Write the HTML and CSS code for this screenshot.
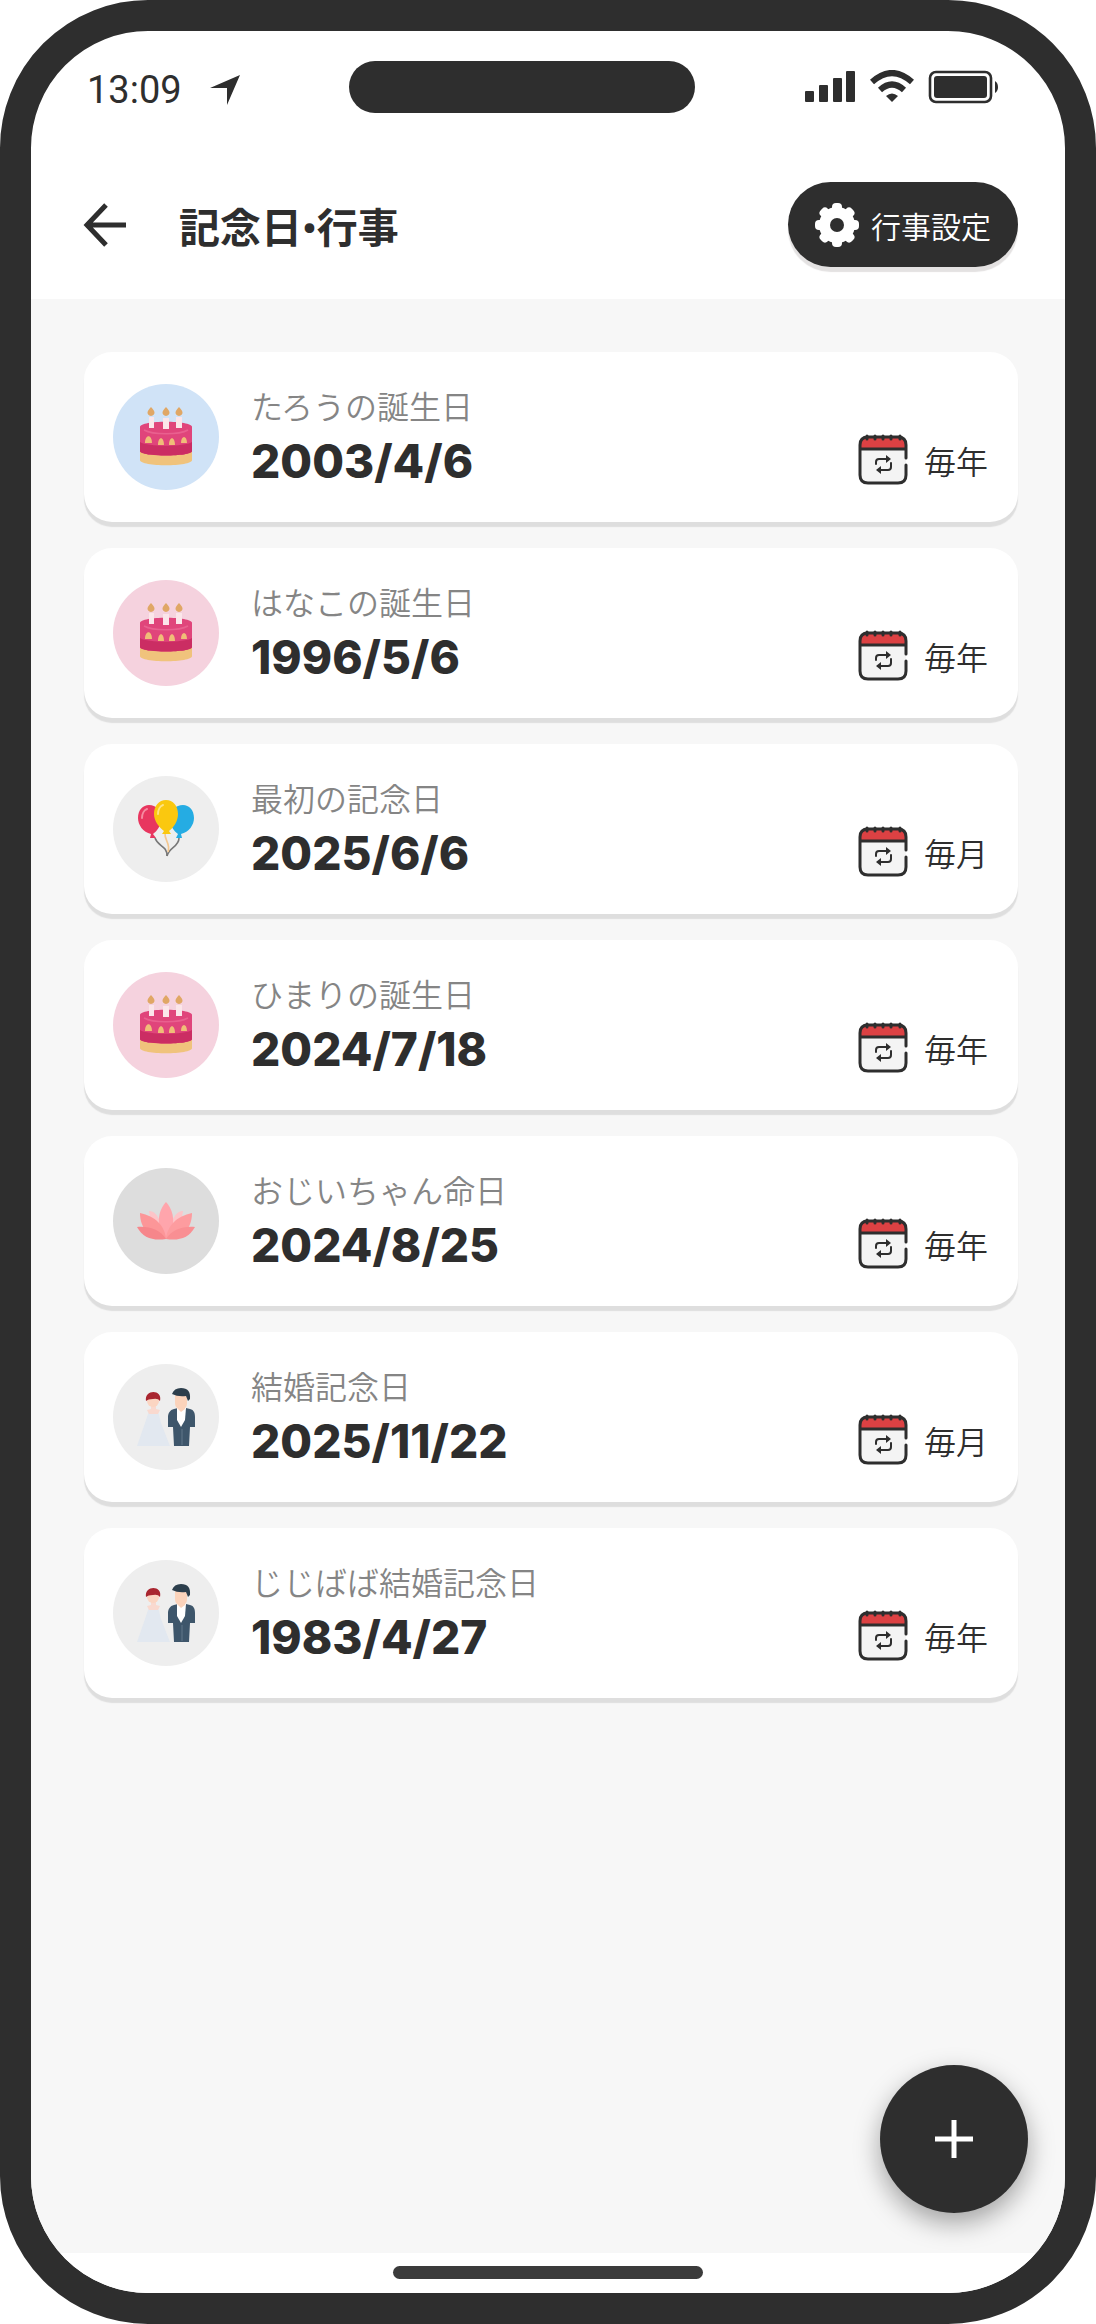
FILE: index.html
```html
<!DOCTYPE html>
<html lang="ja">
<head>
    <meta charset="utf-8">
    <meta name="viewport" content="width=device-width, initial-scale=1">
    <title>記念日•行事</title>
    <link rel="stylesheet" href="styles.css">
</head>
<body>
    <!-- shared icons -->
    <svg class="sprite" aria-hidden="true">
        <symbol id="icon-cake" viewBox="0 0 56 60">
            <path d="M2 44v9c0 7 52 7 52 0v-9z" fill="#f0c37c"/>
            <path d="M2 20c0-7 52-7 52 0v24c0 6-52 6-52 0z" fill="#e0457b"/>
            <path d="M2 35c8 5 44 5 52 0v9c0 6-52 6-52 0z" fill="#cb2d63"/>
            <path d="M6 23c9 5 35 5 44 0" fill="none" stroke="#e9608f" stroke-width="1.5"/>
            <path d="M7 36c0-9 7-9 7 0zM20 38c0-9 6-9 6 0zM31 38c0-9 6-9 6 0zM43 36c0-8 6-8 6 0z" fill="#f0bd78"/>
            <path d="M11 10h5v11h-5zM25 11h6v11h-6zM38 10h6v11h-6z" fill="#fbe6ea"/>
            <path d="M13 0q7 7 0 9q-7-2 0-9zM28 0q7 7 0 9q-7-2 0-9zM41 0q7 7 0 9q-7-2 0-9z" fill="#e0a765"/>
        </symbol>
        <symbol id="icon-balloons" viewBox="0 0 58 60">
            <path d="M18 39c3 9 12 7 12 18" fill="none" stroke="#777" stroke-width="1.6"/>
            <path d="M42 39c0 9-10 9-12 18" fill="none" stroke="#777" stroke-width="1.6"/>
            <path d="M28 33c-1 9 6 11 3 20" fill="none" stroke="#f5c78e" stroke-width="1.6"/>
            <path d="M12 6c7 0 12 5 12 14 0 7-4 12-8 15l3 4h-6l1-4C6 33 1 26 1 19 1 11 6 6 12 6z" fill="#e8365f"/>
            <path d="M46 6c6 0 11 5 11 13 0 7-5 14-13 16l1 4h-6l2-4c-4-3-8-8-8-15 0-9 6-14 13-14z" fill="#25ace3"/>
            <path d="M29 1c7 0 12 6 12 14 0 7-4 13-9 17l2 3h-9l2-3c-5-4-10-10-10-17C17 7 22 1 29 1z" fill="#fac80f"/>
            <path d="M5 19c0-4 2-8 5-9" fill="none" stroke="#f58ba1" stroke-width="2" stroke-linecap="round"/>
            <path d="M21 15c0-4 2-8 5-9" fill="none" stroke="#fde384" stroke-width="2" stroke-linecap="round"/>
        </symbol>
        <symbol id="icon-lotus" viewBox="0 0 60 40">
            <path d="M13 10q10-1 17 28q-14-5-17-28zM47 10q-10-1-17 28q14-5 17-28z" fill="#fdc4c8"/>
            <path d="M30 1c11 12 8 30 0 37c-8-7-11-25 0-37z" fill="#ffa5ac"/>
            <path d="M4 12c15 3 25 13 26 26c-16 0-26-10-26-26z" fill="#fc9698"/>
            <path d="M56 12c-15 3-25 13-26 26c16 0 26-10 26-26z" fill="#fd9c9f"/>
            <path d="M1 26c13-1 23 3 29 12c-13 2-23-1-29-12z" fill="#f6868b"/>
            <path d="M59 26c-13-1-23 3-29 12c13 2 23-1 29-12z" fill="#f98f93"/>
        </symbol>
        <symbol id="icon-couple" viewBox="0 0 60 60">
            <path d="M13 24h9l3 12 9 23H1l8-23z" fill="#e2e8f0"/>
            <path d="M11 23l2 4h9l2-4-4-1v-4h-5v4z" fill="#f9d9cf"/>
            <circle cx="17" cy="14" r="6" fill="#fbd5c2"/>
            <path d="M10 14c-2-12 17-12 14 0q-2-3-7-2-5 0-7 2z" fill="#a9252f"/>
            <path d="M38 22l4-1h8l4 1c4 1 5 4 5 8v10h-5l-1 19H38l-1-19h-5V30c0-4 2-7 6-8z" fill="#3e566b"/>
            <path d="M41 21h9l-1 12-4 7-4-7z" fill="#fff"/>
            <path d="M46 42v16" stroke="#60778a" stroke-width="1"/>
            <path d="M39 8h12v8c0 9-12 9-12 0z" fill="#fbd3bb"/>
            <path d="M42 17h7v5l-4 3-3-3z" fill="#fbd3bb"/>
            <path d="M36 7q2-6 9-6q10 0 9 11l-2 2-2-5q-8 1-14-2z" fill="#2c3e4c"/>
        </symbol>
        <symbol id="icon-calendar" viewBox="0 0 50 52">
            <rect x="2" y="4" width="46" height="46" rx="8" fill="#f4f4f4"/>
            <path d="M2 16v-5q0-7 8-7h30q8 0 8 7v5z" fill="#dc4143"/>
            <path d="M48 25V12q0-8-8-8H10q-8 0-8 8v30q0 8 8 8h30q8 0 8-8V32M2 16h46" fill="none" stroke="#2e2e2e" stroke-width="3" stroke-linecap="round"/>
            <path d="M9 3v3M17 3v3M25 3v3M33 3v3M42 3v3" stroke="#2e2e2e" stroke-width="3" stroke-linecap="round"/>
            <path d="M18 31v-2q0-3 3-3h9M33 30v4q0 3-3 3H20" fill="none" stroke="#2e2e2e" stroke-width="2" stroke-linecap="round"/>
            <path d="M28 22l5 4-5 4zM23 33l-5 4 5 4z" fill="#2e2e2e"/>
        </symbol>
    </svg>

    <div class="phone">
        <div class="status-bar">
            <div class="status-left">
                <span class="clock">13:09</span>
                <svg width="30" height="30" viewBox="0 0 30 30" aria-hidden="true">
                    <path d="M30 0L17 30V13H0z" fill="#2e2e2e"/>
                </svg>
            </div>
            <div class="island"></div>
            <div class="status-right">
                <svg width="51" height="34" viewBox="0 0 51 34" fill="#2e2e2e" aria-hidden="true">
                    <rect x="0" y="21" width="9" height="11" rx="1"/>
                    <rect x="14" y="15" width="9" height="17" rx="1"/>
                    <rect x="28" y="8" width="9" height="24" rx="1"/>
                    <rect x="41" y="1" width="9" height="31" rx="1"/>
                </svg>
                <svg width="44" height="34" viewBox="0 0 44 34" aria-hidden="true">
                    <path d="M2 12Q22-6 42 12" fill="none" stroke="#2e2e2e" stroke-width="6"/>
                    <path d="M10 20Q22 9 34 20" fill="none" stroke="#2e2e2e" stroke-width="6"/>
                    <path d="M16 26q6-5 12 0l-6 6z" fill="#2e2e2e"/>
                </svg>
                <svg width="71" height="34" viewBox="0 0 71 34" aria-hidden="true">
                    <rect x="2" y="2" width="61" height="30" rx="6" fill="none" stroke="#2e2e2e" stroke-width="2.6"/>
                    <rect x="6" y="6" width="53" height="22" rx="3" fill="#2e2e2e"/>
                    <path d="M67 11q3 2 3 6t-3 6z" fill="#2e2e2e"/>
                </svg>
            </div>
        </div>

        <header class="page-header">
            <button type="button" class="back-btn" aria-label="戻る">
                <svg width="44" height="44" viewBox="0 0 44 44" aria-hidden="true">
                    <path d="M23 2L4 22l19 20M4 22h39" fill="none" stroke="#2e2e2e" stroke-width="5"/>
                </svg>
            </button>
            <h1>記念日•行事</h1>
            <button type="button" class="settings-btn">
                <svg width="44" height="44" viewBox="0 0 44 44" aria-hidden="true">
                    <g fill="#fff">
                        <circle cx="22" cy="22" r="18"/>
                        <rect x="17" y="0" width="10" height="44" rx="4"/>
                        <rect x="17" y="0" width="10" height="44" rx="4" transform="rotate(45 22 22)"/>
                        <rect x="17" y="0" width="10" height="44" rx="4" transform="rotate(90 22 22)"/>
                        <rect x="17" y="0" width="10" height="44" rx="4" transform="rotate(135 22 22)"/>
                    </g>
                    <circle cx="22" cy="22" r="7" fill="#2e2e2e"/>
                </svg>
                行事設定
            </button>
        </header>

        <main>
            <ul class="event-list">
                <li class="event">
                    <span class="avatar blue"><svg width="56" height="60"><use href="#icon-cake"/></svg></span>
                    <div class="info">
                        <p class="name">たろうの誕生日</p>
                        <p class="date">2003/4/6</p>
                    </div>
                    <span class="repeat"><svg width="50" height="52"><use href="#icon-calendar"/></svg>毎年</span>
                </li>
                <li class="event">
                    <span class="avatar pink"><svg width="56" height="60"><use href="#icon-cake"/></svg></span>
                    <div class="info">
                        <p class="name">はなこの誕生日</p>
                        <p class="date">1996/5/6</p>
                    </div>
                    <span class="repeat"><svg width="50" height="52"><use href="#icon-calendar"/></svg>毎年</span>
                </li>
                <li class="event">
                    <span class="avatar"><svg width="58" height="60"><use href="#icon-balloons"/></svg></span>
                    <div class="info">
                        <p class="name">最初の記念日</p>
                        <p class="date">2025/6/6</p>
                    </div>
                    <span class="repeat"><svg width="50" height="52"><use href="#icon-calendar"/></svg>毎月</span>
                </li>
                <li class="event">
                    <span class="avatar pink"><svg width="56" height="60"><use href="#icon-cake"/></svg></span>
                    <div class="info">
                        <p class="name">ひまりの誕生日</p>
                        <p class="date">2024/7/18</p>
                    </div>
                    <span class="repeat"><svg width="50" height="52"><use href="#icon-calendar"/></svg>毎年</span>
                </li>
                <li class="event">
                    <span class="avatar gray"><svg width="60" height="40"><use href="#icon-lotus"/></svg></span>
                    <div class="info">
                        <p class="name">おじいちゃん命日</p>
                        <p class="date">2024/8/25</p>
                    </div>
                    <span class="repeat"><svg width="50" height="52"><use href="#icon-calendar"/></svg>毎年</span>
                </li>
                <li class="event">
                    <span class="avatar"><svg width="60" height="60"><use href="#icon-couple"/></svg></span>
                    <div class="info">
                        <p class="name">結婚記念日</p>
                        <p class="date">2025/11/22</p>
                    </div>
                    <span class="repeat"><svg width="50" height="52"><use href="#icon-calendar"/></svg>毎月</span>
                </li>
                <li class="event">
                    <span class="avatar"><svg width="60" height="60"><use href="#icon-couple"/></svg></span>
                    <div class="info">
                        <p class="name">じじばば結婚記念日</p>
                        <p class="date">1983/4/27</p>
                    </div>
                    <span class="repeat"><svg width="50" height="52"><use href="#icon-calendar"/></svg>毎年</span>
                </li>
            </ul>
            <button type="button" class="add-btn" aria-label="追加">
                <svg width="38" height="38" viewBox="0 0 38 38" aria-hidden="true">
                    <path d="M19 0v38M0 19h38" stroke="#fff" stroke-width="5"/>
                </svg>
            </button>
        </main>

        <footer class="home-area">
            <div class="home-bar"></div>
        </footer>
    </div>
</body>
</html>
```
FILE: styles.css
```css
* {
    box-sizing: border-box;
}
body {
    margin: 0;
    background: #fff;
    color: #2e2e2e;
    font-family: Roboto, "Noto Sans CJK JP", sans-serif;
}
h1, p, ul {
    margin: 0;
    padding: 0;
}
button {
    border: none;
    padding: 0;
    font-family: inherit;
    cursor: pointer;
}
svg {
    display: block;
    flex-shrink: 0;
}
.sprite {
    position: absolute;
    width: 0;
    height: 0;
}
.phone {
    display: flex;
    flex-direction: column;
    min-height: 100vh;
    border: 31px solid #2e2e2e;
    border-radius: 148px;
    overflow: hidden;
}

/* status bar */
.status-bar {
    display: flex;
    align-items: center;
    justify-content: space-between;
    padding: 30px 66px 0 56px;
}
.status-left,
.status-right {
    display: flex;
    align-items: center;
}
.status-left {
    gap: 28px;
    padding-top: 6px;
}
.clock {
    font-size: 38px;
    line-height: 46px;
}
.status-right {
    gap: 14px;
}
.island {
    width: 346px;
    height: 52px;
    border-radius: 26px;
    background: #2e2e2e;
}

/* header */
.page-header {
    display: flex;
    align-items: center;
    padding: 69px 47px 32px 52px;
}
.back-btn {
    background: none;
}
.page-header h1 {
    flex: 1;
    margin-left: 52px;
    padding-top: 8px;
    font-size: 41px;
    line-height: 60px;
    font-weight: 700;
}
.settings-btn {
    display: flex;
    align-items: center;
    gap: 12px;
    height: 85px;
    padding: 0 27px;
    border-radius: 43px;
    background: #2e2e2e;
    color: #fff;
    font-size: 30px;
    font-weight: 350;
    box-shadow: 0 5px 1px #e4e2e2;
}

/* events */
main {
    position: relative;
    flex: 1;
    padding: 53px 47px 53px 53px;
    background: #f7f7f7;
}
.event-list {
    display: flex;
    flex-direction: column;
    gap: 26px;
    list-style: none;
}
.event {
    display: flex;
    align-items: center;
    min-height: 170px;
    padding: 0 30px 0 29px;
    border-radius: 28px;
    background: #fff;
    box-shadow: 0 5px 1px #dedede;
}
.avatar {
    display: flex;
    align-items: center;
    justify-content: center;
    flex-shrink: 0;
    width: 106px;
    height: 106px;
    border-radius: 50%;
    background: #eee;
}
.avatar.blue {
    background: #d0e3f7;
}
.avatar.pink {
    background: #f5d2de;
}
.avatar.gray {
    background: #ddd;
}
.info {
    flex: 1;
    margin-left: 32px;
}
.name {
    color: #858585;
    font-size: 32px;
    line-height: 48px;
    font-weight: 350;
}
.date {
    font-family: Inter, sans-serif;
    font-size: 46px;
    line-height: 58px;
    font-weight: 800;
}
.repeat {
    display: flex;
    align-items: flex-start;
    gap: 16px;
    margin-top: 52px;
    font-size: 32px;
    line-height: 60px;
    font-weight: 350;
}

/* floating button */
.add-btn {
    position: absolute;
    right: 37px;
    bottom: 40px;
    display: flex;
    align-items: center;
    justify-content: center;
    width: 148px;
    height: 148px;
    border-radius: 50%;
    background: #2e2e2e;
    box-shadow: 0 10px 26px rgba(0, 0, 0, 0.35);
}

.home-area {
    padding: 13px 0 14px;
    background: #fff;
}
.home-bar {
    width: 30%;
    height: 13px;
    margin: 0 auto;
    border-radius: 7px;
    background: #3b3b3b;
}
```
